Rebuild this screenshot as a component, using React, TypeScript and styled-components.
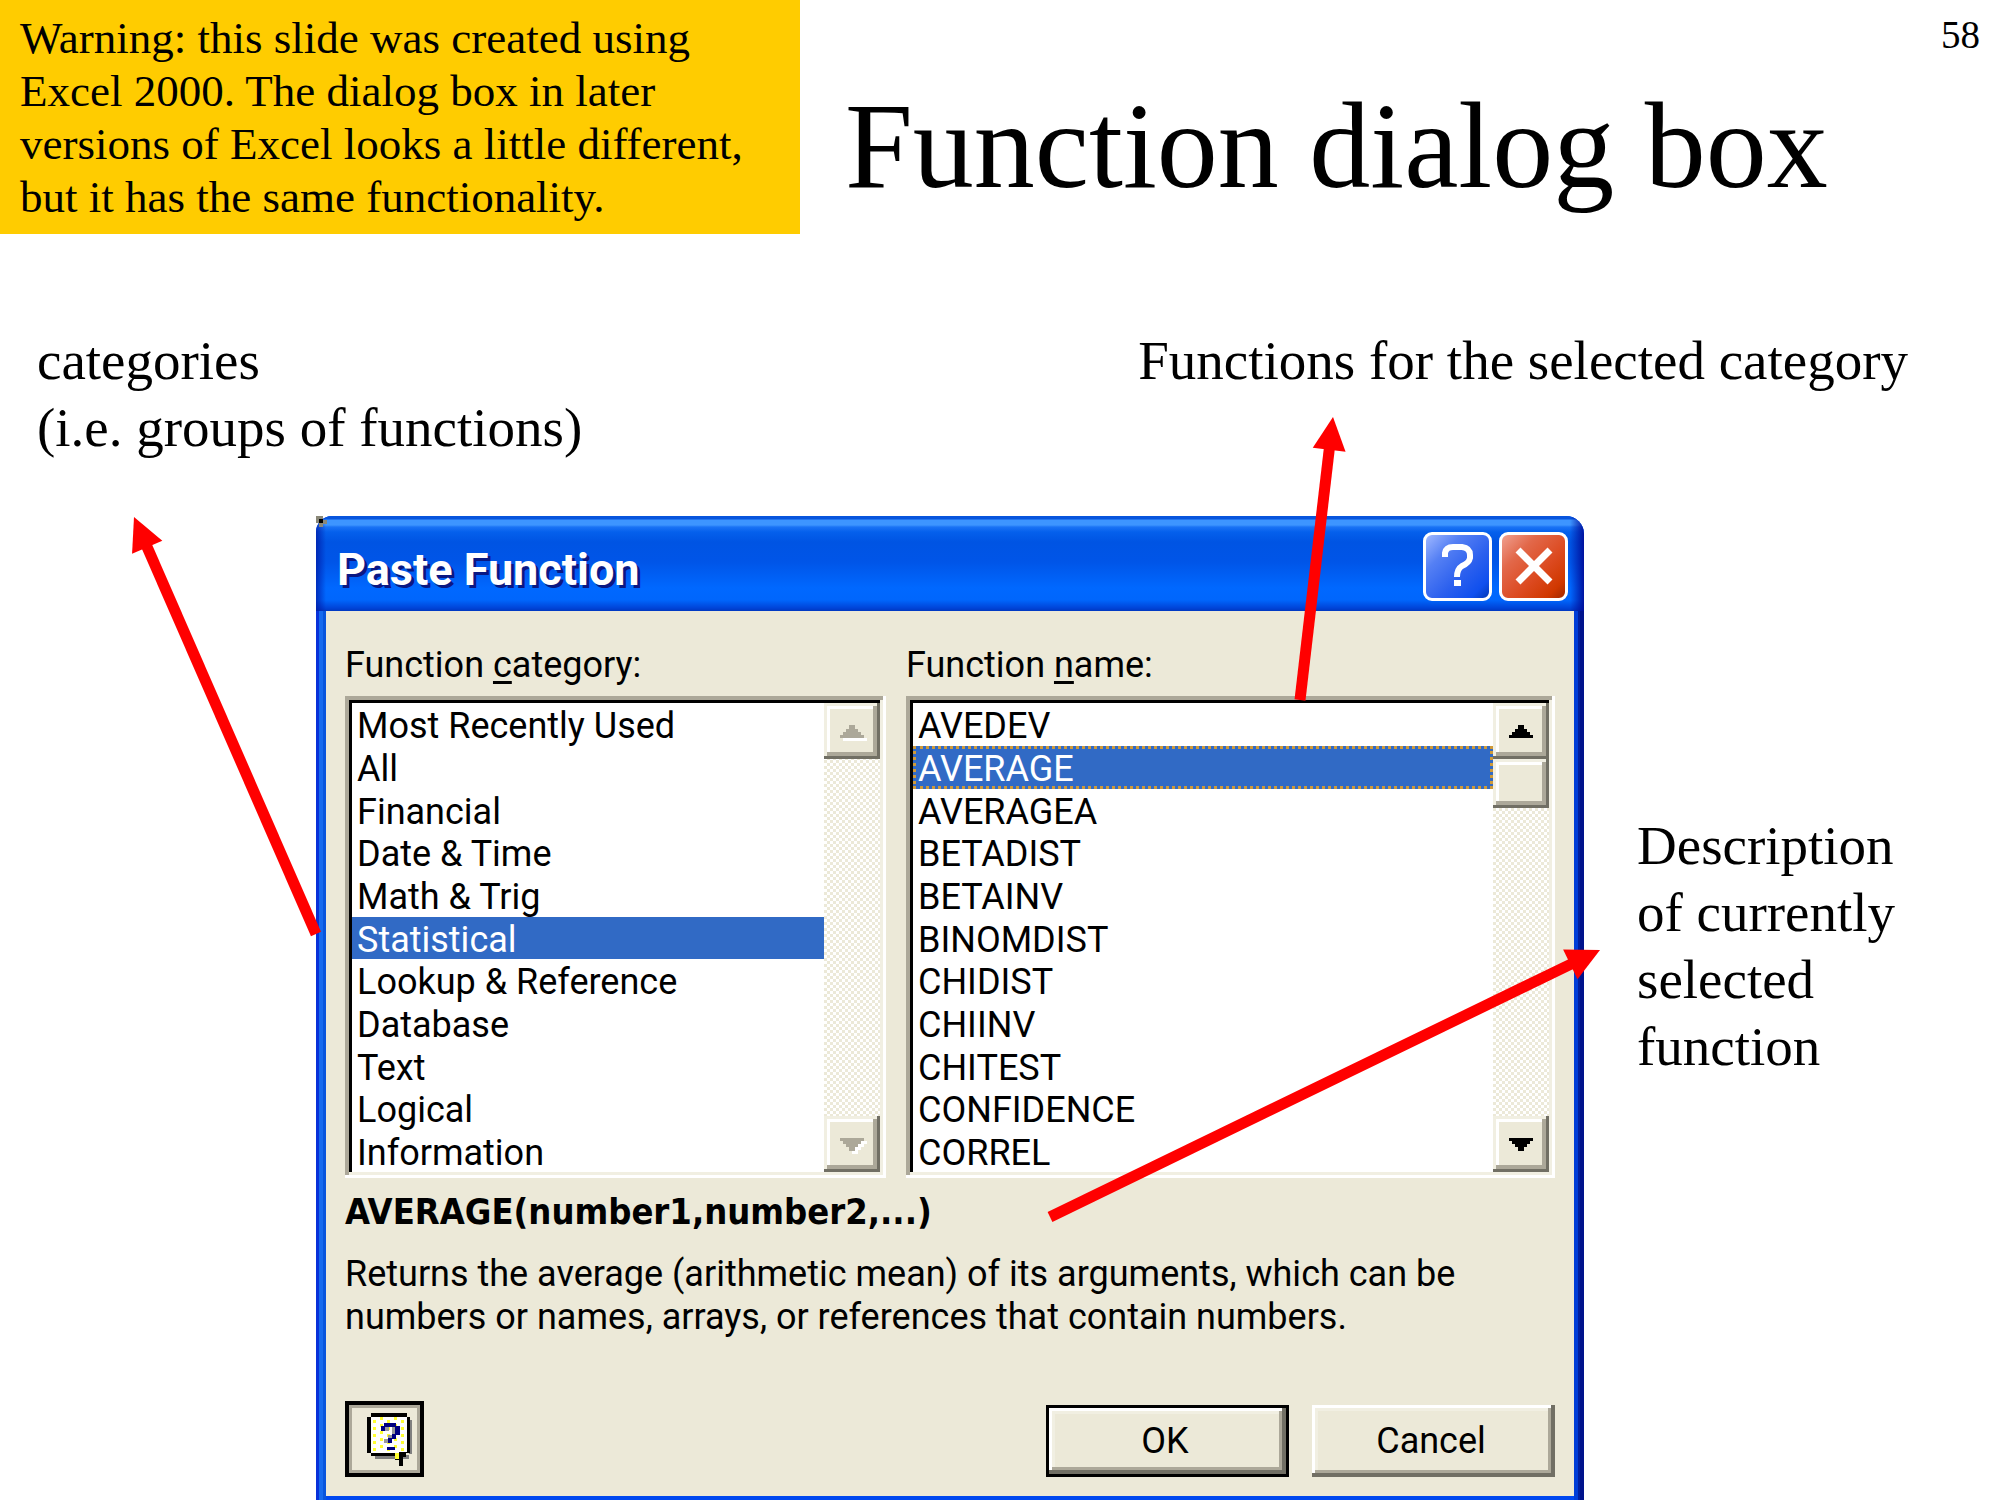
import React from "react";
import styled, { createGlobalStyle, css } from "styled-components";

const face = "#ece9d8";
const shade = "#aca899";
const darkShade = "#716f64";
const light = "#f1efe2";

const GlobalStyle = createGlobalStyle`
  * { box-sizing: border-box; }
  body { margin: 0; background: #fff; color: #000; }
  p, h1, h2 { margin: 0; font-weight: 400; }
`;

const Slide = styled.main`
  position: relative;
  min-height: 100vh;
  overflow: hidden;
  font-family: "Liberation Serif", "Times New Roman", serif;
`;

const Header = styled.header`
  display: grid;
  grid-template-columns: 40% 1fr auto;
`;

const Warning = styled.p`
  padding: 12px 20px 10px;
  background: #ffcc00;
  font-size: 45px;
  line-height: 53px;
`;

const Title = styled.h1`
  padding: 76px 0 0 45px;
  font-size: 122px;
  line-height: 140px;
  white-space: nowrap;
`;

const PageNumber = styled.span`
  padding: 12px 20px 0 0;
  font-size: 39px;
  line-height: 45px;
`;

const Notes = styled.div`
  display: flex;
  justify-content: space-between;
  padding: 93px 92px 55px 37px;
`;

const Note = styled.p`
  font-size: 55px;
  line-height: 67px;
`;

const Stage = styled.div`
  display: grid;
  grid-template-columns: minmax(0, 316fr) minmax(0, 1268fr) minmax(0, 416fr);
`;

const SideNote = styled(Note)`
  grid-column: 3;
  padding: 296px 60px 0 53px;
`;

const Dialog = styled.section`
  grid-column: 2;
  border-radius: 16px 18px 0 0;
  overflow: hidden;
  background: #0048f0;
  font-family: Roboto, "Liberation Sans", sans-serif;
  font-size: 36px;
  line-height: 43px;
`;

const TitleBar = styled.div`
  display: flex;
  align-items: center;
  gap: 7px;
  height: 95px;
  padding: 5px 16px 0 21px;
  background:
    linear-gradient(90deg, rgba(0, 20, 160, 0.7), transparent 10px, transparent calc(100% - 14px), rgba(0, 10, 150, 0.9)),
    linear-gradient(180deg, #0855dd 0 3px, #3d95ff 4px 9px, #1a73f5 11px, #0560ec 16px, #0054e3 26px,
      #0055e8 46px, #0068ff 72px, #0066fc 84px, #0044d8 92px, #0038c0 95px);
`;

const DialogTitle = styled.h2`
  flex: 1;
  padding-top: 8px;
  color: #fff;
  font-size: 45px;
  line-height: 52px;
  font-weight: 700;
  text-shadow: 3px 3px 0 #0a1883;
`;

const CaptionButton = styled.button<{ $close?: boolean }>`
  display: grid;
  place-items: center;
  width: 69px;
  height: 69px;
  padding: 0;
  border: 3px solid #fff;
  border-radius: 9px;
  background: ${(p) =>
    p.$close
      ? "linear-gradient(135deg, #f0a090 0, #e2684a 28%, #dc4a20 60%, #d03800 85%, #a02800 100%)"
      : "linear-gradient(135deg, #a0b8ff 0, #5580f4 28%, #2c60ee 60%, #1050ee 85%, #0038b8 100%)"};
`;

const Frame = styled.div`
  padding: 0 10px 4px;
  background:
    linear-gradient(90deg, #0831d9 0 3px, #166aee 3px 7px, #0855dd 7px 10px, transparent 10px),
    linear-gradient(270deg, #00138c 0 4px, #001ea0 4px 6px, #003dd8 6px 10px, transparent 10px),
    #0048f0;
`;

const Body = styled.div`
  padding: 33px 19px 19px;
  background: ${face};
`;

const Lists = styled.div`
  display: grid;
  grid-template-columns: minmax(0, 541fr) minmax(0, 649fr);
  column-gap: 20px;
`;

const Field = styled.div`
  display: flex;
  flex-direction: column;
  gap: 9px;
`;

const Mnemonic = styled.u`
  text-decoration-thickness: 3px;
  text-underline-offset: 4px;
  text-decoration-skip-ink: none;
`;

const Sunken = styled.div`
  display: flex;
  height: 482px;
  padding: 7px 6px 6px 7px;
  background: #fff;
  box-shadow:
    inset -3px -3px #fff,
    inset 4px 4px ${shade},
    inset -6px -6px ${light},
    inset 7px 7px #000;
`;

const ListBox = styled.select<{ $dotted?: boolean }>`
  flex: 1;
  min-width: 0;
  height: 469px;
  padding: 0;
  border: 0;
  border-radius: 0;
  outline: 0;
  overflow: hidden;
  scrollbar-width: none;
  background: #fff;
  color: #000;
  font: inherit;

  option {
    height: 43px;
    min-height: 0;
    padding: 2px 5px 0;
    line-height: 43px;
    color: #000;
  }
  option:nth-child(3n) {
    height: 42px;
  }
  option:checked {
    background: #316ac5 linear-gradient(#316ac5, #316ac5);
    color: #fff;
    ${(p) =>
      p.$dotted &&
      css`
        outline: 3px dotted #ce9a3a;
        outline-offset: -3px;
      `}
  }
`;

const ScrollBar = styled.div`
  display: flex;
  flex-direction: column;
  width: 56px;
  background: conic-gradient(${face} 25%, #fff 0 50%, ${face} 0 75%, #fff 0) 0 0 / 6px 6px;
`;

const bevel = css`
  border: 0;
  padding: 0;
  background: ${face};
  box-shadow:
    inset -3px -3px ${darkShade},
    inset 3px 3px ${light},
    inset -7px -7px ${shade},
    inset 6px 6px #fff;
`;

const ScrollButton = styled.button`
  ${bevel}
  display: grid;
  place-items: center;
  height: 56px;

  &:last-child {
    margin-top: auto;
  }
`;

const Thumb = styled.div`
  ${bevel}
  height: 49px;
`;

const Signature = styled.p`
  padding: 12px 0 20px;
  font-family: "DejaVu Sans Condensed", "DejaVu Sans", sans-serif;
  font-weight: 700;
`;

const Description = styled.p`
  max-width: 1130px;
`;

const Actions = styled.div`
  display: flex;
  align-items: flex-end;
  gap: 23px;
  padding-top: 62px;
`;

const HelpButton = styled.button`
  display: grid;
  place-items: center;
  width: 79px;
  height: 76px;
  margin-right: auto;
  padding: 0 0 0 10px;
  border: 4px solid #000;
  background: ${face};
  box-shadow: inset 0 0 0 3px ${shade};
`;

const PushButton = styled.button<{ $default?: boolean }>`
  width: 243px;
  height: 72px;
  padding: 0 5px 0 0;
  border: ${(p) => (p.$default ? "3px solid #000" : "0")};
  background: ${face};
  color: #000;
  font: inherit;
  box-shadow:
    inset -4px -4px ${darkShade},
    inset 3px 3px #fff,
    inset -7px -7px ${shade},
    inset 6px 6px ${light};
`;

const Overlay = styled.svg`
  position: absolute;
  top: 0;
  left: 0;
  width: 100%;
  pointer-events: none;
`;

const categories = [
  "Most Recently Used", "All", "Financial", "Date & Time", "Math & Trig", "Statistical",
  "Lookup & Reference", "Database", "Text", "Logical", "Information",
];

const functions = [
  "AVEDEV", "AVERAGE", "AVERAGEA", "BETADIST", "BETAINV", "BINOMDIST",
  "CHIDIST", "CHIINV", "CHITEST", "CONFIDENCE", "CORREL",
];

function ScrollArrow({ down, disabled }: { down?: boolean; disabled?: boolean }) {
  const glyph = down
    ? "M0 0h24v3h-3v3h-3v3h-3v4H9V9H6V6H3V3H0z"
    : "M9 0h6v4h3v3h3v3h3v3H0v-3h3V7h3V4h3z";
  const glint = down ? "M24 3h3v3h-3v3h-3v3h-3v4h-6v-4h3V9h3V6h3V3z" : "M3 13h24v3H3z";
  return (
    <svg width="24" height="13" viewBox="0 0 24 13" overflow="visible" shapeRendering="crispEdges" aria-hidden="true">
      {disabled && <path d={glint} fill="#fff" />}
      <path d={glyph} fill={disabled ? shade : "#000"} />
    </svg>
  );
}

function Arrow({ x1, y1, x2, y2 }: { x1: number; y1: number; x2: number; y2: number }) {
  const length = Math.hypot(x2 - x1, y2 - y1);
  const angle = (Math.atan2(y2 - y1, x2 - x1) * 180) / Math.PI;
  return (
    <g transform={`translate(${x1} ${y1}) rotate(${angle})`} fill="#f00">
      <rect x="0" y="-5.5" width={length - 30} height="11" />
      <path d={`M${length} 0l-33 -16.5v33z`} />
    </g>
  );
}

function BalloonIcon() {
  const dots: React.ReactNode[] = [];
  for (let col = 0; col < 5; col++) {
    for (let row = 0; row < 5; row++) {
      dots.push(
        <rect key={`${col}-${row}`} x={6 + col * 7} y={(col % 2 ? 4 : 7) + row * 7} width="3" height="3" fill="#ffff30" />,
      );
    }
  }
  return (
    <svg width="46" height="53" viewBox="0 0 46 53" shapeRendering="crispEdges" aria-hidden="true">
      <path d="M42 7h3v34h-3v5H8v-4h34z" fill="#808080" />
      <path d="M4 0h36v4h3v36h-4v4h-3v9h-4v-6h-4v-4H4v-3H0V4h4z" fill="#000" />
      <path d="M4 4h36v35h-8v4h-4v-3H4z" fill="#fff" />
      {dots}
      <path d="M28 40h4v6h-4z" fill="#ffff30" />
      <path d="M18 14h4v4h-4zM25 14h7v8h-4v4h-7v4h-4v-4h4v-4h4z" fill="#999" />
      <path d="M17 10h12v3h4v9h-4v4h-4v4h-4v-5h4v-4h3v-7H18v4h-4v-5h3zM20 34h8v3h-8z" fill="#000080" />
    </svg>
  );
}

export default function App() {
  return (
    <Slide>
      <GlobalStyle />
      <Header>
        <Warning>
          Warning: this slide was created using Excel 2000. The dialog box in later versions of Excel looks a
          little different, but it has the same functionality.
        </Warning>
        <Title>Function dialog box</Title>
        <PageNumber>58</PageNumber>
      </Header>

      <Notes>
        <Note>
          categories
          <br />
          (i.e. groups of functions)
        </Note>
        <Note>Functions for the selected category</Note>
      </Notes>

      <Stage>
        <Dialog aria-label="Paste Function">
          <TitleBar>
            <DialogTitle>Paste Function</DialogTitle>
            <CaptionButton aria-label="Help">
              <svg width="34" height="46" viewBox="0 0 34 46" fill="none" stroke="#fff" strokeWidth="6">
                <path d="M4 14V10Q5 4 12 4H21Q29 5 29 12V15Q28 20 21 23Q16 26 16 34" />
                <path d="M13 40h7" />
              </svg>
            </CaptionButton>
            <CaptionButton $close aria-label="Close">
              <svg width="38" height="38" viewBox="0 0 38 38" stroke="#fff" strokeWidth="7">
                <path d="M3 3L35 35M35 3L3 35" />
              </svg>
            </CaptionButton>
          </TitleBar>
          <Frame>
            <Body>
              <Lists>
                <Field>
                  <label htmlFor="category">
                    Function <Mnemonic>c</Mnemonic>ategory:
                  </label>
                  <Sunken>
                    <ListBox id="category" size={11} defaultValue="Statistical">
                      {categories.map((name) => (
                        <option key={name}>{name}</option>
                      ))}
                    </ListBox>
                    <ScrollBar>
                      <ScrollButton disabled aria-label="Scroll categories up">
                        <ScrollArrow disabled />
                      </ScrollButton>
                      <ScrollButton disabled aria-label="Scroll categories down">
                        <ScrollArrow down disabled />
                      </ScrollButton>
                    </ScrollBar>
                  </Sunken>
                </Field>
                <Field>
                  <label htmlFor="function">
                    Function <Mnemonic>n</Mnemonic>ame:
                  </label>
                  <Sunken>
                    <ListBox id="function" size={11} defaultValue="AVERAGE" $dotted>
                      {functions.map((name) => (
                        <option key={name}>{name}</option>
                      ))}
                    </ListBox>
                    <ScrollBar>
                      <ScrollButton aria-label="Scroll functions up">
                        <ScrollArrow />
                      </ScrollButton>
                      <Thumb />
                      <ScrollButton aria-label="Scroll functions down">
                        <ScrollArrow down />
                      </ScrollButton>
                    </ScrollBar>
                  </Sunken>
                </Field>
              </Lists>
              <Signature>AVERAGE(number1,number2,...)</Signature>
              <Description>
                Returns the average (arithmetic mean) of its arguments, which can be numbers or names, arrays, or
                references that contain numbers.
              </Description>
              <Actions>
                <HelpButton aria-label="Office Assistant">
                  <BalloonIcon />
                </HelpButton>
                <PushButton $default>OK</PushButton>
                <PushButton>Cancel</PushButton>
              </Actions>
            </Body>
          </Frame>
        </Dialog>
        <SideNote>Description of currently selected function</SideNote>
      </Stage>

      <Overlay viewBox="0 0 2000 1500" aria-hidden="true">
        <path d="M316 516h7v4h4v4h-4v3h-4v-4h-3z" fill="#8a8878" />
        <path d="M319 519h4v4h-4z" fill="#000" />
        <Arrow x1={316} y1={934} x2={134} y2={517} />
        <Arrow x1={1300} y1={700} x2={1333} y2={417} />
        <Arrow x1={1050} y1={1217} x2={1600} y2={950} />
      </Overlay>
    </Slide>
  );
}
